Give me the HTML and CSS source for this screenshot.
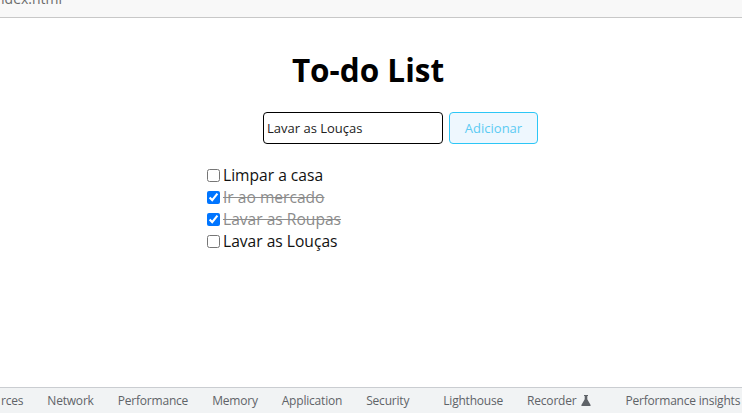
FILE: index.html
```html
<!DOCTYPE html>
<html lang="pt-BR">
<head>
<meta charset="utf-8">
<title>To-do List</title>
<link rel="stylesheet" href="styles.css">
</head>
<body>
<div class="frame">
  <div class="tabbar"><span class="tabname">ndex.html</span></div>
  <main class="page">
    <h1 class="title">To-do List</h1>
    <form class="add-form">
      <input class="task-input" type="text" value="Lavar as Louças">
      <button class="add-btn" type="button">Adicionar</button>
    </form>
    <ul class="tasks">
      <li class="task"><input type="checkbox" class="check"><span>Limpar a casa</span></li>
      <li class="task done"><input type="checkbox" class="check" checked><span>Ir ao mercado</span></li>
      <li class="task done"><input type="checkbox" class="check" checked><span>Lavar as Roupas</span></li>
      <li class="task"><input type="checkbox" class="check"><span>Lavar as Louças</span></li>
    </ul>
  </main>
  <nav class="devtools">
    <span class="dt-tab dt-first">rces</span>
    <span class="dt-tab">Network</span>
    <span class="dt-tab">Performance</span>
    <span class="dt-tab">Memory</span>
    <span class="dt-tab">Application</span>
    <span class="dt-tab">Security</span>
    <span class="dt-tab dt-wide">Lighthouse</span>
    <span class="dt-tab">Recorder <svg class="flask" width="10" height="11" viewBox="0 0 10 11"><path d="M3 0h4v1H6.3v3.2L9.6 10c.2.5-.1 1-.6 1H1c-.5 0-.8-.5-.6-1L3.7 4.2V1H3z" fill="#5f6368"/></svg></span>
    <span class="dt-tab dt-wide">Performance insights</span>
  </nav>
</div>
</body>
</html>
```
FILE: styles.css
```css
* { box-sizing: border-box; }
html, body { margin: 0; padding: 0; }
body {
  width: 742px;
  height: 413px;
  overflow: hidden;
  background: #fff;
  font-family: "Open Sans", "Noto Sans", sans-serif;
}
.frame {
  display: flex;
  flex-direction: column;
  height: 413px;
}
.tabbar {
  height: 18px;
  background: #f8f8f8;
  border-bottom: 1px solid #c8c8c8;
  overflow: hidden;
}
.tabname {
  display: block;
  margin-top: -11px;
  margin-left: -4px;
  font-size: 14px;
  line-height: 20px;
  color: #6b6b6b;
}
.page {
  flex: 1;
  display: flex;
  flex-direction: column;
}
.title {
  margin: 30px 0 0;
  text-align: center;
  font-size: 31.5px;
  line-height: 44px;
  font-weight: 700;
  color: #000;
  padding-right: 6px;
}
.add-form {
  margin: 20px 0 0;
  display: flex;
  justify-content: center;
  gap: 6px;
  padding-left: 59px;
}
.task-input {
  width: 180px;
  height: 32px;
  border: 1px solid #000;
  border-radius: 4px;
  padding: 0 3px;
  font-family: "Open Sans", sans-serif;
  font-size: 13px;
  color: #222;
  background: #fff;
}
.add-btn {
  width: 89px;
  height: 32px;
  border: 1px solid #2cc6f6;
  border-radius: 4px;
  background: #eef7fe;
  color: #5ccbf3;
  font-family: "Open Sans", sans-serif;
  font-size: 13px;
  padding: 0;
}
.tasks {
  list-style: none;
  margin: 20px 0 0;
  padding: 0 0 0 203px;
}
.task {
  display: flex;
  align-items: center;
  height: 22px;
  font-size: 15.6px;
  color: #111;
}
.task.done span {
  color: #8c8c8c;
  text-decoration: line-through;
}
.check {
  width: 13px;
  height: 13px;
  margin: 0 3px 0 4px;
}
.devtools {
  margin-top: auto;
  height: 26px;
  border-top: 1px solid #cacdd1;
  background: #f1f3f4;
  display: flex;
  align-items: center;
  gap: 24px;
  font-family: "Open Sans", "Noto Sans", sans-serif;
  font-size: 12px;
  letter-spacing: -0.2px;
  color: #5f6368;
  white-space: nowrap;
}
.dt-first { margin-left: 1px; }
.dt-wide { margin-left: 10px; }
.flask { vertical-align: -1px; margin-left: 2px; }
```
